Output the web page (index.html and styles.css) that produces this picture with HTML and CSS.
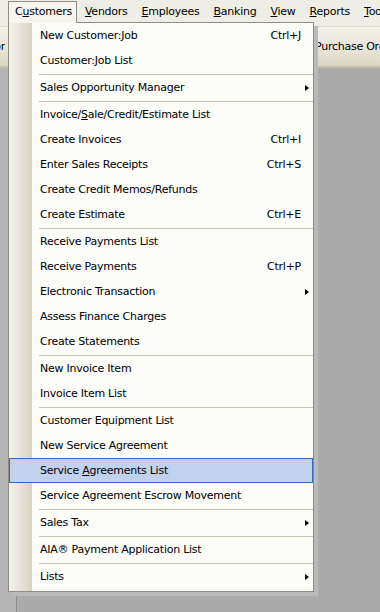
FILE: index.html
```html
<!DOCTYPE html>
<html lang="en">
<head>
    <meta charset="UTF-8">
    <meta name="viewport" content="width=device-width, initial-scale=1.0">
    <title>Customers Menu</title>
    <link rel="stylesheet" href="styles.css">
</head>
<body>
<div class="app">
    <div class="menubar">
        <span class="menubar-item open">C<u>u</u>stomers</span>
        <span class="menubar-item"><u>V</u>endors</span>
        <span class="menubar-item"><u>E</u>mployees</span>
        <span class="menubar-item"><u>B</u>anking</span>
        <span class="menubar-item"><u>V</u>iew</span>
        <span class="menubar-item"><u>R</u>eports</span>
        <span class="menubar-item"><u>T</u>ools</span>
    </div>
    <div class="toolbar">
        <span class="tool">Vendor</span>
        <span class="tool">Purchase Orders</span>
    </div>
    <div class="workspace">
        <div class="side-panel"></div>
    </div>

    <!-- Customers dropdown -->
    <div class="dropdown">
        <div class="item"><span>New Customer:Job</span><span class="key">Ctrl+J</span></div>
        <div class="item"><span>Customer:Job List</span></div>
        <div class="sep"></div>
        <div class="item"><span>Sales Opportunity Manager</span><span></span><span class="arrow"></span></div>
        <div class="sep"></div>
        <div class="item"><span>Invoice/<u>S</u>ale/Credit/Estimate List</span></div>
        <div class="item"><span>Create Invoices</span><span class="key">Ctrl+I</span></div>
        <div class="item"><span>Enter Sales Receipts</span><span class="key">Ctrl+S</span></div>
        <div class="item"><span>Create Credit Memos/Refunds</span></div>
        <div class="item"><span>Create Estimate</span><span class="key">Ctrl+E</span></div>
        <div class="sep"></div>
        <div class="item"><span>Receive Payments List</span></div>
        <div class="item"><span>Receive Payments</span><span class="key">Ctrl+P</span></div>
        <div class="item"><span>Electronic Transaction</span><span></span><span class="arrow"></span></div>
        <div class="item"><span>Assess Finance Charges</span></div>
        <div class="item"><span>Create Statements</span></div>
        <div class="sep"></div>
        <div class="item"><span>New Invoice Item</span></div>
        <div class="item"><span>Invoice Item List</span></div>
        <div class="sep"></div>
        <div class="item"><span>Customer Equipment List</span></div>
        <div class="item"><span>New Service Agreement</span></div>
        <div class="item active"><span>Service <u>A</u>greements List</span></div>
        <div class="item"><span>Service Agreement Escrow Movement</span></div>
        <div class="sep"></div>
        <div class="item"><span>Sales Tax</span><span></span><span class="arrow"></span></div>
        <div class="sep"></div>
        <div class="item"><span>AIA® Payment Application List</span></div>
        <div class="sep"></div>
        <div class="item"><span>Lists</span><span></span><span class="arrow"></span></div>
    </div>
</div>
</body>
</html>
```

FILE: styles.css
```css
body {
    margin: 0;
    background-color: #ababab;
    font-family: "DejaVu Sans", Verdana, sans-serif;
    font-size: 11px;
    letter-spacing: -0.25px;
    color: #000;
}

.app {
    position: relative;
    width: 380px;
    height: 612px;
    overflow: hidden;
    display: flex;
    flex-direction: column;
}

/* menu bar */
.menubar {
    display: flex;
    height: 26px;
    padding-left: 8px;
    background-color: #efeee6;
    white-space: nowrap;
}

.menubar-item {
    height: 21px;
    margin-top: 1px;
    padding: 0 5px 0 6px;
    line-height: 20px;
    border: 1px solid transparent;
    border-bottom: none;
}

.menubar-item + .menubar-item {
    padding-left: 7px;
}

.menubar-item.open {
    position: relative;
    z-index: 2;
    padding-right: 4px;
    border-color: #8f8d83;
    background-color: #f6f5ef;
}

/* toolbar */
.toolbar {
    display: grid;
    grid-template-columns: 315px 1fr;
    align-items: center;
    height: 39px;
    background: linear-gradient(#f3f2eb, #e4e1d3 70%, #d9d5c3);
    border-top: 1px solid #dedbcc;
    border-bottom: 2px solid #c4c0ae;
    white-space: nowrap;
    overflow: hidden;
}

.toolbar .tool:first-child {
    direction: rtl;
    overflow: hidden;
    width: 5px;
}

/* workspace */
.workspace {
    flex: 1;
    display: flex;
}

.side-panel {
    width: 16px;
    background-color: #b4b4b4;
    border-right: 1px solid #8c8c8c;
}

/* dropdown */
.dropdown {
    position: absolute;
    left: 8px;
    top: 22px;
    width: 306px;
    box-sizing: border-box;
    padding: 1px 0 2px;
    border: 1px solid #8f8d83;
    border-top: none;
    background: linear-gradient(to right, #f3f2ec 0, #e6e3d6 12px, #d6d2bf 23px, #fcfcf9 23px);
    box-shadow: 4px 4px 0 #bababa;
    z-index: 1;
}

.dropdown::before {
    content: '';
    position: absolute;
    top: 0;
    left: 68px;
    right: 0;
    height: 1px;
    background-color: #8f8d83;
}

.item {
    display: grid;
    grid-template-columns: 1fr auto 8px;
    align-items: center;
    height: 25px;
    box-sizing: border-box;
    padding: 0 3px 0 30px;
    border: 1px solid transparent;
    white-space: nowrap;
}

.item.active {
    background-color: #c1d2ee;
    border-color: #316ac5;
}

.arrow {
    justify-self: end;
    width: 0;
    height: 0;
    border-left: 4px solid #000;
    border-top: 3.5px solid transparent;
    border-bottom: 3.5px solid transparent;
}

.sep {
    height: 1px;
    margin-left: 30px;
    border-bottom: 1px solid #c5c2b2;
}
```
